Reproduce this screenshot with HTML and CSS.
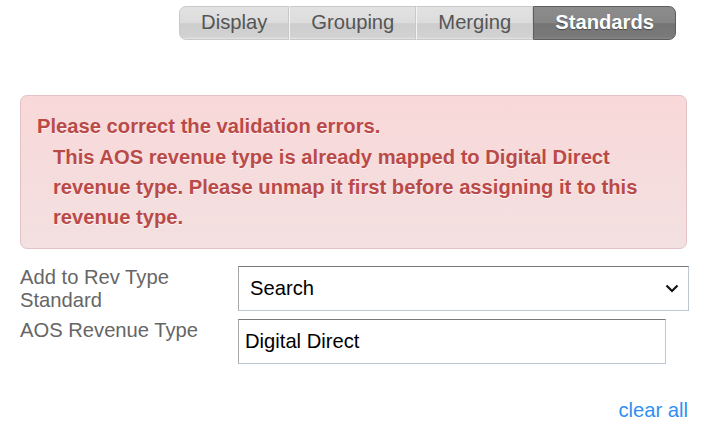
FILE: index.html
```html
<!DOCTYPE html>
<html>
<head>
<meta charset="utf-8">
<link rel="stylesheet" href="styles.css">
</head>
<body>
<div class="page">
  <nav class="tabs">
    <a class="tab">Display</a>
    <a class="tab">Grouping</a>
    <a class="tab">Merging</a>
    <a class="tab active">Standards</a>
  </nav>
  <div class="alert">
    <div class="alert-title">Please correct the validation errors.</div>
    <div class="alert-item">This AOS revenue type is already mapped to Digital Direct revenue type. Please unmap it first before assigning it to this revenue type.</div>
  </div>
  <div class="form">
    <label class="label">Add to Rev Type Standard</label>
    <div class="field">
      <div class="select"><span>Search</span>
        <svg class="chev" width="14" height="9" viewBox="0 0 14 9"><path d="M1.5 1.5 L7 7 L12.5 1.5" fill="none" stroke="#111" stroke-width="2.2"/></svg>
      </div>
    </div>
    <label class="label">AOS Revenue Type</label>
    <div class="field">
      <div class="input">Digital Direct</div>
    </div>
  </div>
  <div class="actions"><a class="clear">clear all</a></div>
</div>
</body>
</html>
```
FILE: styles.css
```css
html, body { margin: 0; padding: 0; background: #fff; }
body { font-family: "Liberation Sans", Arial, sans-serif; font-size: 20.2px; }
.page { width: 669px; padding: 6px 0 0 20px; }
.tabs { display: flex; justify-content: flex-end; margin-right: 13px; }
.tab {
  display: block; height: 32px; line-height: 31px; padding: 0 21px;
  color: #555; border: 1px solid #c9c9c9; border-left-color: #f4f4f4;
  background: linear-gradient(#e2e2e2 0%, #dcdcdc 50%, #cdcdcd 52%, #d2d2d2 94%, #e6e6e6 100%);
}
.tab:first-child { border-left-color: #c9c9c9; border-radius: 7px 0 0 7px; }
.tab.active {
  color: #fff; font-weight: bold; border-color: #5e5e5e; border-radius: 0 7px 7px 0;
  background: linear-gradient(#8c8c8c 0%, #868686 50%, #747474 52%, #7a7a7a 94%, #8a8a8a 100%);
  text-shadow: 0 1px 1px rgba(0,0,0,0.4);
}
.alert {
  margin-top: 55px; width: 632px; padding: 16px 17px 16px 16px;
  border: 1px solid #e3c4c6; border-radius: 7px;
  background: linear-gradient(#f9d8d9, #f3e0e0);
  color: #b94a48; font-weight: bold; line-height: 30px;
  text-shadow: 0 1px 0 rgba(255,255,255,0.7);
}
.alert-title { margin-top: -1px; margin-bottom: 1px; }
.alert-item { padding-left: 16px; }
.form {
  display: grid; grid-template-columns: 218px 451px; row-gap: 5px;
  margin-top: 15px; color: #666; line-height: 23px;
}
.label { display: block; padding-top: 2px; }
.field { padding-top: 2px; }
.select {
  height: 43px; display: flex; align-items: center; justify-content: space-between;
  padding: 0 9px 0 11px; color: #000;
  border: 1px solid #bcc7d3; border-top-color: #7a7a7a; border-left-color: #a8a8a8;
}
.input {
  width: 414px; height: 43px; display: flex; align-items: center; padding: 0 6px;
  color: #000; border: 1px solid #bcc7d3; border-top-color: #7a7a7a; border-left-color: #a8a8a8;
}
.actions { display: flex; justify-content: flex-end; margin-top: 35px; padding-right: 1px; }
.clear { color: #2f8ff2; }
```
